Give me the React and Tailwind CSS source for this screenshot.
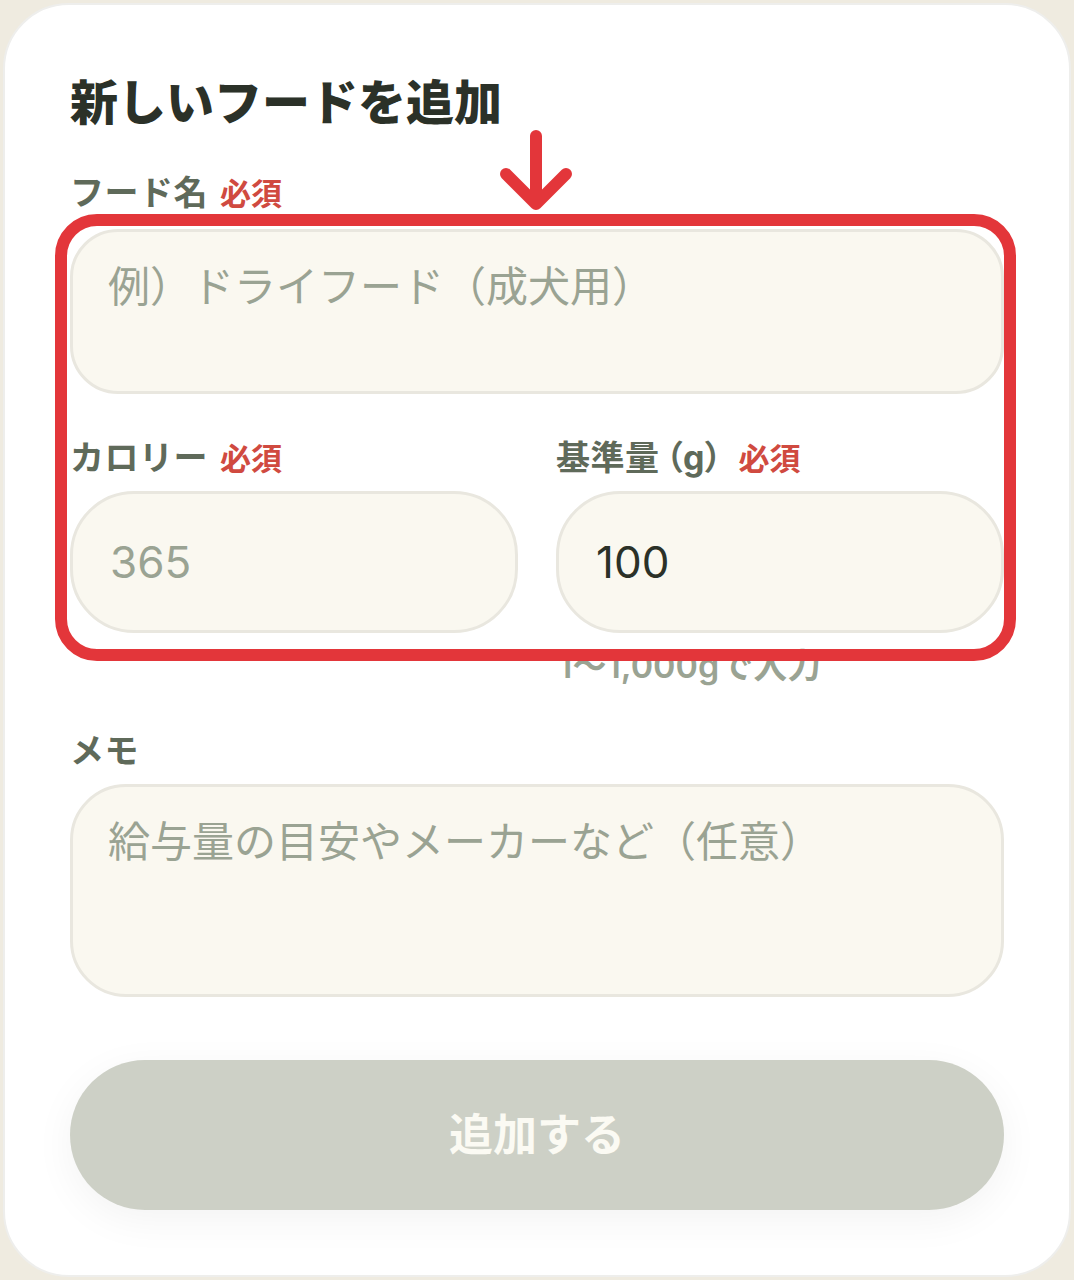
import React from "react";

function Label({ children, required }) {
  return (
    <div className="flex items-baseline gap-[12px] leading-[40px]">
      <span className="text-[34px] font-bold tracking-[0.5px] text-[#5f6a5a]">{children}</span>
      {required && <span className="text-[31px] font-bold text-[#d04a40]">必須</span>}
    </div>
  );
}

export default function App() {
  return (
    <div className="relative min-h-[1280px] bg-[#efebe0] px-[3px] pt-[3px] font-['Inter','Noto_Sans_CJK_JP',sans-serif]">
      <div className="h-[1274px] rounded-[66px] border-2 border-[#eeeeec] bg-white px-[65px] pt-[68px]">
        <h2 className="text-[48px] font-black leading-[60px] text-[#2b3128]">新しいフードを追加</h2>

        <div className="mt-[40px]">
          <Label required>フード名</Label>
          <textarea
            className="mt-[15px] block h-[165px] w-full resize-none rounded-[48px] border-[3px] border-[#e9e7df] bg-[#faf8f0] px-[35px] pt-[21px] font-['Noto_Sans_CJK_JP',sans-serif] text-[42px] leading-[62px] text-[#2b3128] outline-none placeholder:text-[#9aa393]"
            placeholder="例）ドライフード（成犬用）"
          />
        </div>

        <div className="mt-[44px] grid grid-cols-2 gap-[38px]">
          <div>
            <Label required>カロリー</Label>
            <input
              className="mt-[12px] block h-[142px] w-full rounded-[64px] border-[3px] border-[#e9e7df] bg-[#faf8f0] px-[37px] text-[44px] text-[#2b3128] outline-none placeholder:text-[#9aa393]"
              placeholder="365"
            />
          </div>
          <div>
            <Label required>
              基準量<span className="ml-[6px] mr-[4px] [font-feature-settings:'palt']">（g）</span>
            </Label>
            <input
              className="mt-[12px] block h-[142px] w-full rounded-[64px] border-[3px] border-[#e9e7df] bg-[#faf8f0] px-[37px] text-[44px] text-[#2b3128] outline-none placeholder:text-[#9aa393]"
              defaultValue="100"
            />
            <p className="mt-[13px] pl-[2px] text-[34px] font-semibold leading-[40px] text-[#9aa393]">1〜1,000gで入力</p>
          </div>
        </div>

        <div className="mt-[45px]">
          <Label>メモ</Label>
          <textarea
            className="mt-[13px] block h-[213px] w-full resize-none rounded-[56px] border-[3px] border-[#e9e7df] bg-[#faf8f0] px-[35px] pt-[21px] font-['Noto_Sans_CJK_JP',sans-serif] text-[42px] leading-[62px] text-[#2b3128] outline-none placeholder:text-[#9aa393]"
            placeholder="給与量の目安やメーカーなど（任意）"
          />
        </div>

        <button className="mt-[63px] block h-[150px] w-full rounded-full bg-[#cdd0c6] text-[44px] font-bold text-[#fbfaf3] shadow-[0_10px_40px_rgba(0,0,0,0.05)]">
          追加する
        </button>
      </div>

      {/* annotation overlay */}
      <div className="pointer-events-none absolute left-[55px] top-[214px] h-[447px] w-[961px] rounded-[42px] border-[12px] border-[#e3363a]" />
      <svg className="pointer-events-none absolute left-[500px] top-[128px]" width="72" height="90" viewBox="0 0 72 90" fill="none" strokeLinecap="round" strokeLinejoin="round">
        <path d="M36 8V76M6 46L36 76L66 46" stroke="#ffffff" strokeWidth="18" />
        <path d="M36 8V76M6 46L36 76L66 46" stroke="#e3363a" strokeWidth="12" />
      </svg>
    </div>
  );
}
